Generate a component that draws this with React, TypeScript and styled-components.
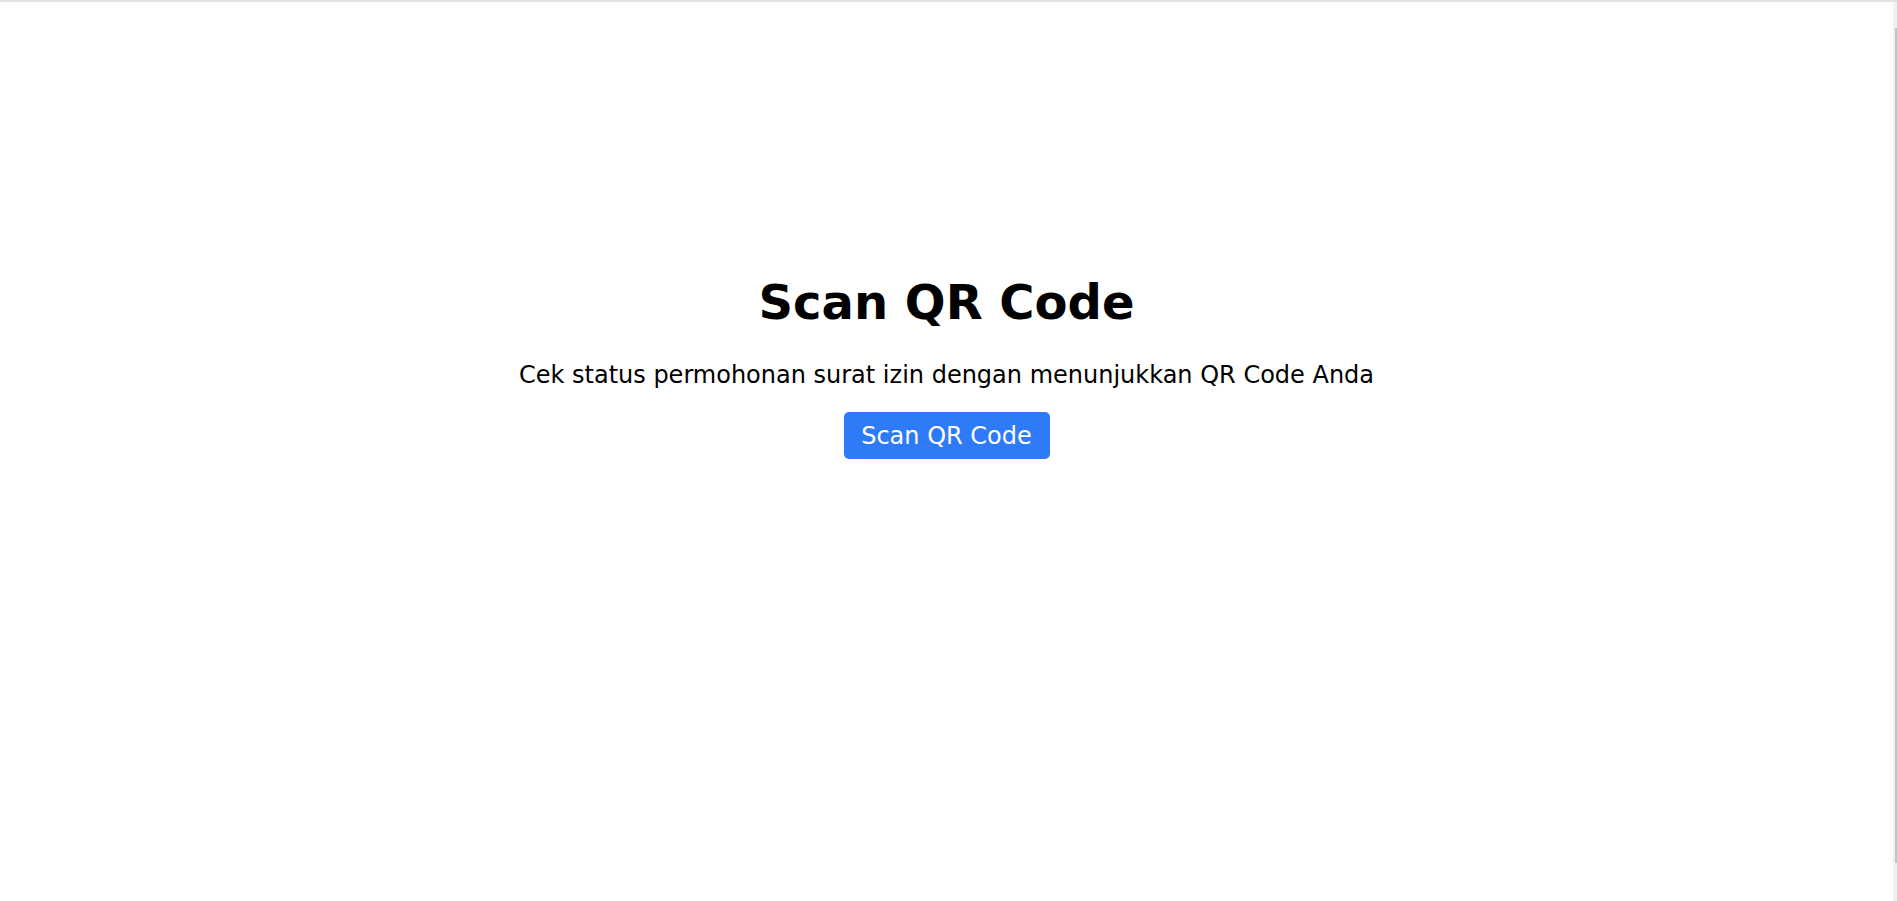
import React from "react";
import styled, { createGlobalStyle } from "styled-components";

const Global = createGlobalStyle`
  html, body { margin: 0; padding: 0; background: #ffffff; }
  body { font-family: "DejaVu Sans", Verdana, sans-serif; color: #000; overflow: hidden; }
`;

const Frame = styled.div`
  display: flex;
  height: 901px;
  border-top: 2px solid #e2e2e2;
  box-sizing: border-box;
`;

const Main = styled.main`
  flex: 1;
  display: flex;
  flex-direction: column;
  align-items: center;
  padding-top: 272px;
`;

const Title = styled.h1`
  margin: 0;
  font-family: "DejaVu Sans", Verdana, sans-serif;
  font-weight: 700;
  font-size: 48px;
  line-height: 56px;
`;

const Subtitle = styled.p`
  margin: 31px 0 0;
  font-family: "DejaVu Sans", Verdana, sans-serif;
  font-size: 24px;
  line-height: 28px;
`;

const Button = styled.button`
  margin-top: 23px;
  width: 206px;
  height: 47px;
  padding: 0;
  border: none;
  border-radius: 5px;
  background: #2f7af6;
  color: #fff;
  font-family: "DejaVu Sans", Verdana, sans-serif;
  font-size: 24px;
  cursor: pointer;
`;

const Track = styled.div`
  width: 4px;
  background: #f0f0f0;
  display: flex;
  justify-content: flex-end;
  padding: 26px 0 38px;
  box-sizing: border-box;
`;

const Thumb = styled.div`
  width: 2px;
  background: #c4c4c4;
`;

export default function App() {
  return (
    <>
      <Global />
      <Frame>
        <Main>
          <Title>Scan QR Code</Title>
          <Subtitle>Cek status permohonan surat izin dengan menunjukkan QR Code Anda</Subtitle>
          <Button>Scan QR Code</Button>
        </Main>
        <Track>
          <Thumb />
        </Track>
      </Frame>
    </>
  );
}
